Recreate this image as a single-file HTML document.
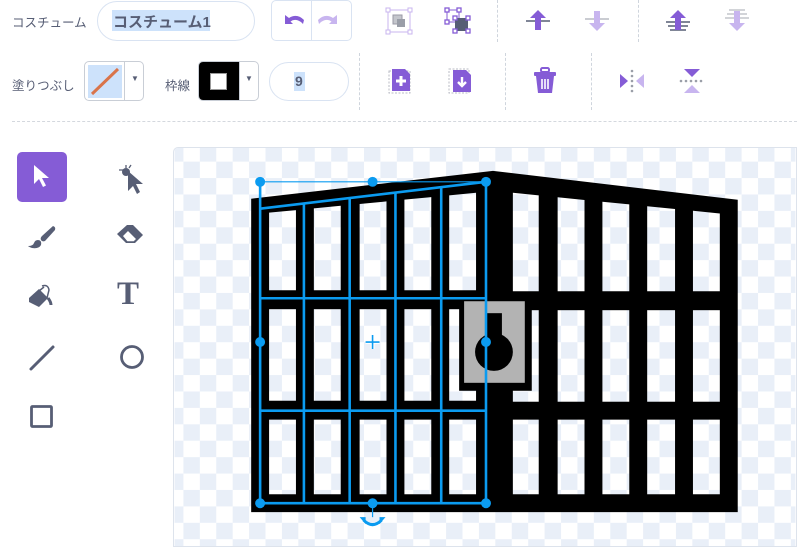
<!DOCTYPE html>
<html><head><meta charset="utf-8"><style>
*{box-sizing:border-box;margin:0;padding:0}
body{width:797px;height:547px;background:#fff;position:relative;overflow:hidden;font-family:"Liberation Sans","Noto Sans CJK JP",sans-serif;color:#575e75}
.abs{position:absolute}
.lbl{font-size:12.5px;color:#575e75}
.pill{border:1px solid #d9e3f2;border-radius:20px;background:#fff}
.vd{border-left:1px dashed #cfd5dd;width:0}
</style></head><body>
<div class="abs lbl" style="left:12px;top:12px">コスチューム</div>
<div class="abs pill" style="left:97px;top:1px;width:158px;height:40px"></div>
<div class="abs" style="left:112px;top:10px;width:98px;height:21px;background:#cde2fb"></div>
<div class="abs" style="left:113px;top:11px;font-size:15px;font-weight:bold;color:#575e75">コスチューム1</div>
<div class="abs" style="left:271px;top:0px;width:81px;height:41px;border:1px solid #d9e3f2;border-radius:5px"></div>
<div class="abs" style="left:311px;top:1px;width:1px;height:39px;background:#d9e3f2"></div>
<svg class="abs" style="left:281px;top:10px" width="60" height="22">
<path d="M4 5 L4 14 L12 14 L9.5 11.5 Q14 8 20 12 L22 14 L23 10 Q16 3 8 8 Z" fill="#855cd6"/>
<path d="M56 5 L56 14 L48 14 L50.5 11.5 Q46 8 40 12 L38 14 L37 10 Q44 3 52 8 Z" fill="#c8b5ef"/>
</svg>
<svg class="abs" style="left:385px;top:7px" width="28" height="28"><rect x="3" y="3" width="22" height="22" fill="none" stroke="#c8b5ef"/><rect x="8" y="8" width="9" height="9" fill="#c4c6cc" stroke="#9a9aa6"/><rect x="12" y="12" width="8" height="8" fill="#9a9ea8"/><g fill="#fff" stroke="#c8b5ef"><rect x="1" y="1" width="4" height="4"/><rect x="23" y="1" width="4" height="4"/><rect x="1" y="23" width="4" height="4"/><rect x="23" y="23" width="4" height="4"/></g></svg>
<svg class="abs" style="left:444px;top:7px" width="28" height="28"><rect x="3" y="3" width="12" height="12" fill="none" stroke="#855cd6"/><rect x="11" y="11" width="13" height="13" fill="#575e75"/><g fill="#fff" stroke="#855cd6" stroke-width="1.3"><rect x="1" y="1" width="4" height="4"/><rect x="13" y="1" width="4" height="4"/><rect x="1" y="13" width="4" height="4"/><rect x="9" y="9" width="4" height="4"/><rect x="22" y="9" width="4" height="4"/><rect x="9" y="22" width="4" height="4"/><rect x="22" y="22" width="4" height="4"/></g></svg>
<div class="abs vd" style="left:497px;top:0;height:42px"></div>
<svg class="abs" style="left:524px;top:9px" width="30" height="24"><path d="M2 12H26" stroke="#575e75" stroke-width="1.5"/><path d="M14 1 L22 9 L17 9 L17 21 L11 21 L11 9 L6 9 Z" fill="#855cd6"/></svg>
<svg class="abs" style="left:583px;top:9px" width="30" height="24"><path d="M2 10H26" stroke="#b9bbc4" stroke-width="1.5"/><path d="M14 22 L22 14 L17 14 L17 2 L11 2 L11 14 L6 14 Z" fill="#c8b5ef"/></svg>
<div class="abs vd" style="left:638px;top:0;height:42px"></div>
<svg class="abs" style="left:664px;top:9px" width="30" height="24"><path d="M2 13H26M4 17H24M6 21H22" stroke="#575e75" stroke-width="1.5"/><path d="M14 1 L22 9 L17 9 L17 21 L11 21 L11 9 L6 9 Z" fill="#855cd6"/></svg>
<svg class="abs" style="left:723px;top:9px" width="30" height="24"><path d="M2 9H26M4 5H24M6 1H22" stroke="#c4c6cc" stroke-width="1.5"/><path d="M14 22 L22 14 L17 14 L17 2 L11 2 L11 14 L6 14 Z" fill="#c8b5ef"/></svg>

<div class="abs lbl" style="left:12px;top:75px">塗りつぶし</div>
<div class="abs" style="left:84px;top:61px;width:60px;height:40px;border:1px solid #c9ced6;border-radius:5px;overflow:hidden">
<div class="abs" style="left:3px;top:3px;width:34px;height:33px;background:#cde2fb"></div>
<svg class="abs" style="left:3px;top:3px" width="34" height="33"><path d="M4 29L30 4" stroke="#d9744a" stroke-width="3"/></svg>
<div class="abs" style="left:39px;top:0;width:1px;height:40px;background:#c9ced6"></div>
<div class="abs" style="left:46px;top:12px;font-size:8px;color:#575e75">▼</div></div>
<div class="abs lbl" style="left:165px;top:75px">枠線</div>
<div class="abs" style="left:198px;top:61px;width:61px;height:40px;border:1px solid #c9ced6;border-radius:5px;overflow:hidden">
<div class="abs" style="left:0;top:0;width:40px;height:40px;background:#000"></div>
<div class="abs" style="left:11px;top:11px;width:17px;height:17px;background:#fff;border:1px solid #999"></div>
<div class="abs" style="left:40px;top:0;width:1px;height:40px;background:#c9ced6"></div>
<div class="abs" style="left:46px;top:12px;font-size:8px;color:#575e75">▼</div></div>
<div class="abs pill" style="left:269px;top:62px;width:80px;height:39px"></div>
<div class="abs" style="left:294px;top:72px;width:11px;height:19px;background:#cde2fb"></div>
<div class="abs" style="left:295px;top:73px;font-size:14px;font-weight:bold;color:#575e75">9</div>
<div class="abs vd" style="left:359px;top:53px;height:57px"></div>
<svg class="abs" style="left:388px;top:67px" width="26" height="28"><rect x="1" y="4" width="21" height="22" fill="none" stroke="#b9bbc4" stroke-dasharray="2 1.5"/><path d="M4 2H17L22 7V24H4Z" fill="#855cd6"/><path d="M13 9V19M8 14H18" stroke="#fff" stroke-width="3"/></svg>
<svg class="abs" style="left:448px;top:67px" width="26" height="28"><rect x="1" y="2" width="20" height="24" fill="none" stroke="#b9bbc4" stroke-dasharray="2 1.5"/><path d="M5 3H18L23 8V25H5Z" fill="#855cd6"/><path d="M14 10V18M10 15L14 19L18 15" stroke="#fff" stroke-width="2.4" fill="none"/></svg>
<div class="abs vd" style="left:505px;top:53px;height:57px"></div>
<svg class="abs" style="left:533px;top:67px" width="24" height="28"><rect x="8" y="1" width="8" height="4" rx="1.5" fill="none" stroke="#855cd6" stroke-width="2"/><rect x="1" y="5" width="22" height="4" rx="1" fill="#855cd6"/><path d="M3 9H21L19 26H5Z" fill="#855cd6"/><path d="M9 12V22M12 12V22M15 12V22" stroke="#fff" stroke-width="1.6"/></svg>
<div class="abs vd" style="left:591px;top:53px;height:57px"></div>
<svg class="abs" style="left:618px;top:68px" width="28" height="26"><path d="M2 6L10 13L2 20Z" fill="#855cd6"/><path d="M26 6L18 13L26 20Z" fill="#c8b5ef"/><g fill="#9a9ea8"><circle cx="14" cy="3" r="1.3"/><circle cx="14" cy="8" r="1.3"/><circle cx="14" cy="13" r="1.3"/><circle cx="14" cy="18" r="1.3"/><circle cx="14" cy="23" r="1.3"/></g></svg>
<svg class="abs" style="left:678px;top:67px" width="28" height="28"><path d="M6 2L22 2L14 10Z" fill="#855cd6"/><path d="M6 26L22 26L14 18Z" fill="#c8b5ef"/><g fill="#9a9ea8"><circle cx="3" cy="14" r="1.3"/><circle cx="8" cy="14" r="1.3"/><circle cx="13" cy="14" r="1.3"/><circle cx="18" cy="14" r="1.3"/><circle cx="23" cy="14" r="1.3"/></g></svg>
<div class="abs" style="left:12px;top:121px;width:785px;border-top:1px dashed #d4d8de"></div>

<div class="abs" style="left:17px;top:152px;width:50px;height:50px;background:#855cd6;border-radius:5px"></div>
<svg class="abs" style="left:30px;top:163px" width="24" height="28"><path d="M4 2V21L9 16L13 24L16 22.5L12 15H19Z" fill="#fff"/></svg>
<svg class="abs" style="left:115px;top:160px" width="34" height="36"><circle cx="11" cy="12" r="4" fill="#575e75"/><path d="M4 10H8M11 5V8M16 5L14 8" stroke="#575e75" stroke-width="1.3"/><path d="M13 11V31L18 26L22 34L25 32L21 24H28Z" fill="#575e75"/></svg>
<svg class="abs" style="left:25px;top:222px" width="34" height="30"><path d="M28 4Q31 5 30 8L20 19Q17 20 16 18Q15 16 17 14Z" fill="#575e75"/><path d="M13 18Q17 18 16 23Q14 27 7 26Q4 25 3 24Q8 24 9 21Q10 18 13 18Z" fill="#575e75"/></svg>
<svg class="abs" style="left:115px;top:222px" width="34" height="30"><path d="M12 3L2 12L11 21H20L28 13L18 3Z" fill="#575e75"/><path d="M7 14L13 8L22 17L19 20H12Z" fill="#fff" stroke="#575e75" stroke-width="1.5"/></svg>
<svg class="abs" style="left:26px;top:282px" width="32" height="30"><path d="M3 16L13 7L22 16L13 25L3 20Z" fill="#575e75"/><path d="M8 13L18 5" stroke="#575e75" stroke-width="1.5" fill="none"/><path d="M16 4Q22 2 23 8L21 16" stroke="#575e75" stroke-width="1.5" fill="none"/><path d="M22 16Q25 20 25 23" stroke="#575e75" stroke-width="3"/></svg>
<div class="abs" style="left:117px;top:276px;font-family:'Liberation Serif',serif;font-size:33px;font-weight:bold;color:#575e75">T</div>
<svg class="abs" style="left:27px;top:343px" width="30" height="30"><path d="M4 26L26 4" stroke="#575e75" stroke-width="3" stroke-linecap="round"/></svg>
<svg class="abs" style="left:118px;top:343px" width="28" height="28"><circle cx="14" cy="14" r="10.5" fill="none" stroke="#575e75" stroke-width="2.8"/></svg>
<svg class="abs" style="left:29px;top:404px" width="26" height="26"><rect x="2.5" y="2.5" width="20" height="20" rx="1" fill="none" stroke="#575e75" stroke-width="2.8"/></svg>

<svg class="abs" style="left:173px;top:147px;border:1px solid #dde3ec;border-radius:5px 0 0 0" width="624" height="400" viewBox="173 147 624 400">
<defs><pattern id="ck" patternUnits="userSpaceOnUse" x="165.4" y="144.2" width="33" height="33">
<rect width="33" height="33" fill="#fff"/><rect width="16.5" height="16.5" fill="#e9eff8"/><rect x="16.5" y="16.5" width="16.5" height="16.5" fill="#e9eff8"/></pattern></defs>
<rect x="173" y="147" width="624" height="400" fill="url(#ck)"/>
<polygon points="250,198 493,170 739,199 739,513 250,513" fill="#000"/>
<g fill="url(#ck)">
<polygon points="268,212 295,209.4 295,290 268,290"/>
<polygon points="313,207.7 340,205.1 340,290 313,290"/>
<polygon points="359,203.3 386,200.7 386,290 359,290"/>
<polygon points="404,198.9 431,196.4 431,290 404,290"/>
<polygon points="449,194.6 476,192 476,290 449,290"/>
<polygon points="513,192 539,194.6 539,291 513,291"/>
<polygon points="558,196.5 585,199.2 585,291 558,291"/>
<polygon points="603,201 630,203.7 630,291 603,291"/>
<polygon points="648,205.5 676,208.3 676,291 648,291"/>
<polygon points="694,210.1 721,212.8 721,291 694,291"/>
<rect x="268" y="309" width="27" height="92"/><rect x="313" y="309" width="27" height="92"/><rect x="359" y="309" width="27" height="92"/><rect x="404" y="309" width="27" height="92"/><rect x="449" y="309" width="27" height="92"/>
<rect x="513" y="310" width="26" height="92"/><rect x="558" y="310" width="27" height="92"/><rect x="603" y="310" width="27" height="92"/><rect x="648" y="310" width="28" height="92"/><rect x="694" y="310" width="27" height="92"/>
<rect x="268" y="420" width="27" height="75"/><rect x="313" y="420" width="27" height="75"/><rect x="359" y="420" width="27" height="75"/><rect x="404" y="420" width="27" height="75"/><rect x="449" y="420" width="27" height="75"/>
<rect x="513" y="420" width="26" height="75"/><rect x="558" y="420" width="27" height="75"/><rect x="603" y="420" width="27" height="75"/><rect x="648" y="420" width="28" height="75"/><rect x="694" y="420" width="27" height="75"/>
</g>
<rect x="459" y="295" width="73" height="96" fill="#000"/>
<rect x="464" y="301" width="61" height="82" fill="#b3b3b3"/>
<rect x="487" y="313" width="15" height="30" fill="#000"/>
<circle cx="494" cy="352" r="19" fill="#000"/>
<g stroke="#0b9bf0" stroke-width="2.6" fill="none">
<path d="M259 208L486 181M259 298H486M259 411H486M259 504H486"/>
<path d="M259 181V504M303 203V504M349 197V504M395 192V504M441 187V504M486 181V504"/>
</g>
<path d="M259 181H486" stroke="#0b9bf0" stroke-width="1.2"/>
<path d="M372 504V518" stroke="#0b9bf0" stroke-width="1.2"/>
<g fill="#0b9bf0"><circle cx="259" cy="181" r="5"/><circle cx="372" cy="181" r="5"/><circle cx="486" cy="181" r="5"/><circle cx="259" cy="342" r="5"/><circle cx="486" cy="342" r="5"/><circle cx="259" cy="504" r="5"/><circle cx="372" cy="504" r="5"/><circle cx="486" cy="504" r="5"/></g>
<path d="M365 342H379M372 335V349" stroke="#fff" stroke-width="4"/>
<path d="M365 342H379M372 335V349" stroke="#0b9bf0" stroke-width="1.6"/>
<path d="M363 521Q372 530 381 521" stroke="#0b9bf0" stroke-width="3" fill="none"/>
<path d="M359 518L365 518L365 525Z M385 518L379 518L379 525Z" fill="#0b9bf0"/>
</svg>
</body></html>
